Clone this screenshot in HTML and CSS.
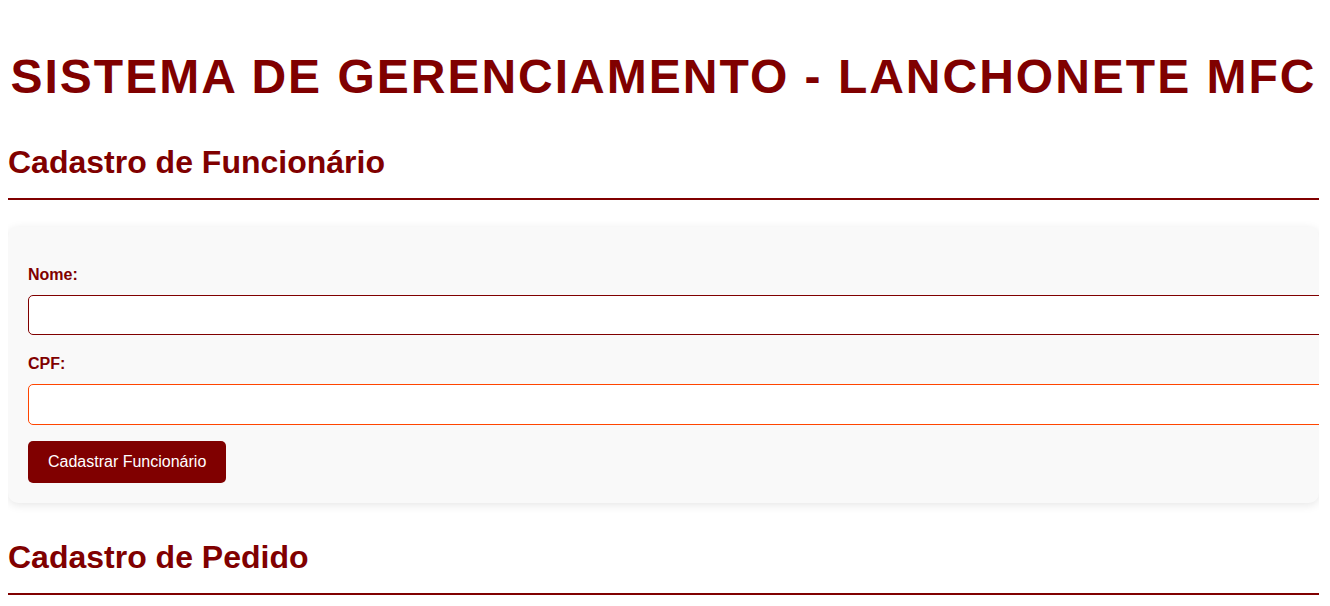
FILE: index.html
```html
<!DOCTYPE html>
<html lang="pt-BR">
<head>
<meta charset="utf-8">
<title>Sistema de Gerenciamento - Lanchonete MFC</title>
<link rel="stylesheet" href="styles.css">
</head>
<body>
  <h1 class="page-title">SISTEMA DE GERENCIAMENTO - LANCHONETE MFC</h1>

  <section class="section">
    <h2 class="section-title">Cadastro de Funcionário</h2>
    <form class="card">
      <div class="field">
        <label class="field-label" for="nome">Nome:</label>
        <input class="field-input" id="nome" type="text">
      </div>
      <div class="field">
        <label class="field-label" for="cpf">CPF:</label>
        <input class="field-input field-input--alt" id="cpf" type="text">
      </div>
      <button class="btn" type="button">Cadastrar Funcionário</button>
    </form>
  </section>

  <section class="section">
    <h2 class="section-title">Cadastro de Pedido</h2>
  </section>
</body>
</html>
```

FILE: styles.css
```css
html, body {
  background: #ffffff;
}

body {
  margin: 8px 11px 8px 8px;
  font-family: "Liberation Sans", Arial, sans-serif;
  color: #800000;
}

.page-title {
  margin: 41px 0 40px;
  font-size: 48px;
  font-weight: bold;
  letter-spacing: 2px;
  text-align: center;
  color: #800000;
}

.section-title {
  margin: 0 0 27px;
  padding-bottom: 17px;
  font-size: 32px;
  font-weight: bold;
  color: #800000;
  border-bottom: 2px solid #800000;
}

.card {
  display: flex;
  flex-direction: column;
  align-items: flex-start;
  gap: 16px;
  margin-bottom: 36px;
  padding: 39px 20px 20px;
  background: #f9f9f9;
  border-radius: 10px;
  box-shadow: 0 2px 10px rgba(0, 0, 0, 0.1);
}

.field {
  align-self: stretch;
}

.field + .field {
  padding-top: 4px;
}

.field-label {
  display: block;
  margin-bottom: 11px;
  font-size: 16px;
  font-weight: bold;
  color: #800000;
}

.field-input {
  display: block;
  width: 100%;
  margin: 0;
  padding: 10.2px 12px;
  font-family: "Liberation Sans", Arial, sans-serif;
  font-size: 16px;
  background: #ffffff;
  border: 1px solid #800000;
  border-radius: 5px;
  outline: none;
}

.field-input--alt {
  border-color: #ff4500;
}

.btn {
  display: block;
  padding: 12px 20px;
  font-family: "Liberation Sans", Arial, sans-serif;
  font-size: 16px;
  color: #ffffff;
  background: #800000;
  border: none;
  border-radius: 5px;
  cursor: pointer;
}
```
